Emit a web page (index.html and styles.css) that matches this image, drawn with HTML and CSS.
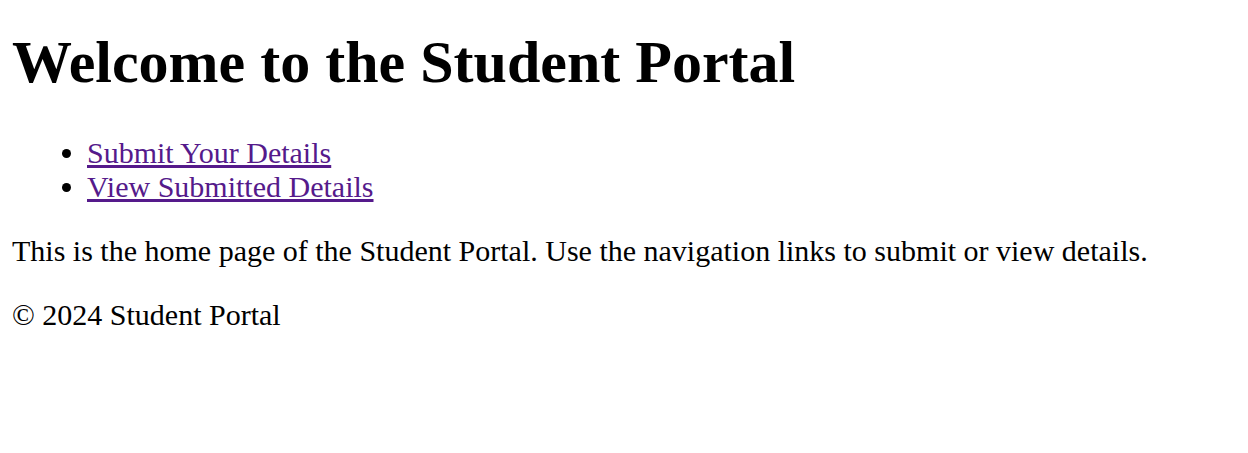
FILE: index.html
```html
<!DOCTYPE html>
<html>
<head>
<meta charset="utf-8">
<title>Student Portal</title>
<link rel="stylesheet" href="styles.css">
</head>
<body class="page">
<header>
<h1 class="title">Welcome to the Student Portal</h1>
<nav>
<ul class="nav-list">
<li><a class="nav-link" href="#submit">Submit Your Details</a></li>
<li><a class="nav-link" href="#view">View Submitted Details</a></li>
</ul>
</nav>
</header>
<main>
<p class="intro">This is the home page of the Student Portal. Use the navigation links to submit or view details.</p>
</main>
<footer>
<p class="copy">&copy; 2024 Student Portal</p>
</footer>
</body>
</html>
```
FILE: styles.css
```css
html { background: #fff; }
.page {
  margin: 12px;
  font-family: "Liberation Serif", "Times New Roman", serif;
  font-size: 30px;
  color: #000;
}
.title {
  font-size: 60px;
  font-weight: bold;
  margin: 16px 0 39px;
}
.nav-list {
  margin: 30px 0;
  padding-left: 75px;
}
.nav-link { color: #551a8b; }
.intro { margin: 30px 0; }
.copy { margin: 30px 0; }
```
